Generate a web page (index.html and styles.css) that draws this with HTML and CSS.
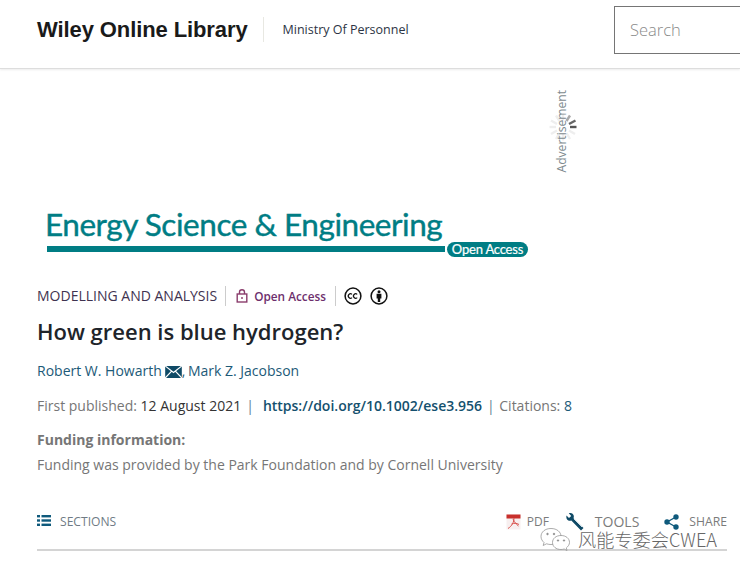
FILE: index.html
```html
<!DOCTYPE html>
<html lang="en">
<head>
<meta charset="utf-8">
<title>How green is blue hydrogen?</title>
<link rel="stylesheet" href="styles.css">
</head>
<body>
<header class="top">
  <div class="brand">Wiley Online Library</div>
  <div class="inst">Ministry Of Personnel</div>
  <div class="search">Search</div>
</header>
<div class="ad">
  <div class="ad-box">
    <svg class="spinner" width="30" height="30" viewBox="0 0 30 30">
      <g stroke-width="2.4" fill="none">
        <path d="M15 1.5V8" stroke="#eee"/>
        <path d="M22 3.5L18.5 9" stroke="#aaa"/>
        <path d="M27.5 8.5L21 12" stroke="#666"/>
        <path d="M28.5 15H22" stroke="#555"/>
        <path d="M27 22L21 18.5" stroke="#eee"/>
        <path d="M22 27L18.5 21" stroke="#eee"/>
        <path d="M15 28.5V22" stroke="#eee"/>
        <path d="M8 27L11.5 21" stroke="#eee"/>
        <path d="M3 22L9 18.5" stroke="#eee"/>
        <path d="M1.5 15H8" stroke="#eee"/>
        <path d="M3 8.5L9 12" stroke="#eee"/>
        <path d="M8 3.5L11.5 9" stroke="#eee"/>
      </g>
    </svg>
    <span class="ad-label">Advertisement</span>
  </div>
</div>
<main class="content">
  <div class="journal">
    <div class="journal-name">Energy Science &amp; Engineering</div>
    <div class="journal-rule">
      <span class="rule-bar"></span>
      <span class="oa-pill">Open Access</span>
    </div>
  </div>
  <div class="meta-row">
    <span class="kind">MODELLING AND ANALYSIS</span>
    <span class="oa">
      <svg width="12" height="14" viewBox="0 0 12 14" fill="none" stroke="#8a3c6c" stroke-width="1.4">
        <rect x="1.2" y="5" width="9.6" height="8" />
        <path d="M3.5 5V3.2a2.5 2.5 0 0 1 5 0V5"/>
        <path d="M6 8v2"/>
      </svg>
      Open Access
    </span>
    <span class="cc">
      <svg width="18" height="18" viewBox="0 0 18 18">
        <circle cx="9" cy="9" r="7.9" fill="#fff" stroke="#111" stroke-width="1.5"/>
        <path d="M8 7.4a2.2 2.2 0 1 0 0 3.2M13.2 7.4a2.2 2.2 0 1 0 0 3.2" fill="none" stroke="#111" stroke-width="1.2"/>
      </svg>
      <svg width="18" height="18" viewBox="0 0 18 18">
        <circle cx="9" cy="9" r="7.9" fill="#fff" stroke="#111" stroke-width="1.5"/>
        <circle cx="9" cy="4.8" r="1.5" fill="#111"/>
        <path d="M6.6 6.8h4.8v4.6h-1.2V15H7.8v-3.6H6.6z" fill="#111"/>
      </svg>
    </span>
  </div>
  <h1 class="title">How green is blue hydrogen?</h1>
  <div class="authors">
    <a>Robert W. Howarth</a><svg class="mail" width="17" height="12" viewBox="0 0 18 13"><rect width="18" height="13" fill="#0f4a66"/><path d="M0 0L9 7L18 0M0 13L7 5.5M18 13L11 5.5" fill="none" stroke="#fff" stroke-width="1.3"/></svg><span class="comma">,</span><a>Mark Z. Jacobson</a>
  </div>
  <div class="pub">
    First published: <span class="dark">12 August 2021</span><span class="bar first">|</span><a class="doi">https://doi.org/10.1002/ese3.956</a><span class="bar">|</span>Citations: <a class="cit">8</a>
  </div>
  <div class="fund-h">Funding information:</div>
  <div class="fund">Funding was provided by the Park Foundation and by Cornell University</div>
  <nav class="tools">
    <div class="sections">
      <svg width="14" height="11" viewBox="0 0 14 11" fill="#0f5a7c">
        <rect x="0" y="0" width="3" height="2.4"/><rect x="4.5" y="0" width="9.5" height="2.4"/>
        <rect x="0" y="4.3" width="3" height="2.4"/><rect x="4.5" y="4.3" width="9.5" height="2.4"/>
        <rect x="0" y="8.6" width="3" height="2.4"/><rect x="4.5" y="8.6" width="9.5" height="2.4"/>
      </svg>
      <span>SECTIONS</span>
    </div>
    <div class="actions">
      <span class="act pdf">
        <svg width="15" height="16" viewBox="0 0 15 16">
          <rect x="0.5" y="0.5" width="14" height="15" fill="#f7efef"/>
          <rect x="0.5" y="0.5" width="14" height="4" fill="#c8302c"/>
          <path d="M8 4C8 8 6 12 2 14.500M5.500 10C8 9 11 9 13 10.500M7 5C9 9 10 10 12.500 12" fill="none" stroke="#d9534f" stroke-width="1"/>
        </svg>
        PDF
      </span>
      <span class="act tl">
        <svg width="20" height="20" viewBox="0 0 20 20">
          <path d="M1.500 3.500L4 6L6.200 4L3.800 1.300C5.800 .3 8.300 1.200 8.800 3.800C9 4.800 8.800 5.500 8.500 6.200L18.500 16L16 18.500L6.300 8.500C4 9.500 .5 8 1.500 3.500Z" fill="#0f4a66"/>
          <path d="M9 7L17 15" stroke="#cfe0e8" stroke-width="1"/>
        </svg>
        TOOLS
      </span>
      <span class="act sh">
        <svg width="15" height="16" viewBox="0 0 15 16" fill="#0f5a7c">
          <circle cx="12" cy="3" r="2.700"/><circle cx="3" cy="8" r="2.700"/><circle cx="12" cy="13" r="2.700"/>
          <path d="M12 3L3 8L12 13" fill="none" stroke="#0f5a7c" stroke-width="1.400"/>
        </svg>
        SHARE
      </span>
    </div>
  </nav>
  <div class="tools-rule"></div>
</main>
<div class="watermark">
  <svg width="32" height="25" viewBox="0 0 32 24" fill="#fff" stroke="#888" stroke-width="0.7">
    <path d="M11 1C5 1 1 4.500 1 9C1 11.500 2.300 13.500 4 15L3.200 18L6.500 16.300C8 16.800 9.500 17 11 17C17 17 21 13.500 21 9C21 4.500 17 1 11 1Z"/>
    <path d="M21 8C16 8 12.500 11 12.500 15C12.500 19 16 22 21 22C22 22 23.200 21.800 24.200 21.500L27 23L26.300 20.400C28 19 29.500 17.200 29.500 15C29.500 11 26 8 21 8Z"/>
    <circle cx="7.500" cy="6.500" r="0.800" fill="#777"/><circle cx="14" cy="6.500" r="0.800" fill="#777"/>
    <circle cx="18" cy="13" r="0.700" fill="#777"/><circle cx="24" cy="13" r="0.700" fill="#777"/>
  </svg>
  <span class="wm-text">风能专委会CWEA</span>
</div>
</body>
</html>
```
FILE: styles.css
```css
* { box-sizing: border-box; }
html, body { margin: 0; padding: 0; }
body {
  width: 740px;
  height: 572px;
  overflow: hidden;
  position: relative;
  background: #fff;
  font-family: "Open Sans", "Noto Sans", sans-serif;
  color: #5f5f5f;
}
a { color: #1c5a78; text-decoration: none; }

.top {
  height: 69px;
  display: flex;
  align-items: center;
  padding: 0 0 9px 37px;
  border-bottom: 1px solid #ddd;
  box-shadow: 0 1px 2px rgba(0,0,0,.08);
}
.brand {
  font-family: "Liberation Sans", Arial, sans-serif;
  font-weight: 700;
  font-size: 22px;
  letter-spacing: -.1px;
  color: #1a1a1a;
  padding-right: 15px;
  border-right: 1px solid #e8e8e2;
  height: 25px;
  line-height: 25px;
}
.inst {
  font-size: 12.5px;
  color: #2c3444;
  margin-left: 19px;
}
.search {
  margin-left: auto;
  width: 126px;
  height: 48px;
  margin-right: 0;
  border: 1px solid #757575;
  border-right: 0;
  padding-left: 15px;
  line-height: 46px;
  font-size: 16.5px;
  font-weight: 300;
  color: #8a8a8a;
}

.ad { height: 131px; display: flex; justify-content: flex-start; padding-left: 548px; }
.ad-box { position: relative; width: 30px; height: 131px; }
.spinner { position: absolute; left: 0; top: 43px; }
.ad-label {
  position: absolute;
  left: 6px;
  top: 21px;
  writing-mode: vertical-rl;
  transform: rotate(180deg);
  font-size: 12.1px;
  line-height: 16px;
  color: #7e8a8e;
}

.content { padding: 0 13px 0 37px; }
.journal { width: 491px; margin-left: 8px; height: 64px; margin-top: 6px; }
.journal-name {
  font-family: Lato, sans-serif;
  font-size: 31.5px;
  line-height: 36px;
  letter-spacing: -.45px;
  -webkit-text-stroke: .4px #007d84;
  color: #007d84;
}
.journal-rule { display: flex; align-items: center; margin-top: -1px; height: 16px; }
.rule-bar { width: 398px; height: 6px; margin-left: 2px; background: #007d84; }
.oa-pill {
  width: 81px;
  height: 15px;
  margin-left: 2px;
  background: #007d84;
  border-radius: 8px;
  color: #fff;
  font-family: Lato, sans-serif;
  font-size: 13px;
  line-height: 15px;
  text-align: center;
  letter-spacing: -.2px;
  -webkit-text-stroke: .2px #fff;
}

.meta-row { display: flex; align-items: center; height: 20px; margin-top: 16px; }
.kind { font-size: 14px; color: #3f3350; padding-right: 8px; border-right: 1px solid #ccc; line-height: 20px; }
.oa { display: flex; align-items: center; gap: 6px; font-size: 11.8px; font-weight: 600; color: #6d2f6d; padding: 0 9px 0 10px; border-right: 1px solid #ccc; line-height: 20px; }
.cc { display: flex; gap: 8px; margin-left: 8px; }

.title { margin: 10px 0 0; font-size: 22px; line-height: 30px; font-weight: 600; color: #20242a; }
.authors { margin-top: 15px; display: flex; align-items: center; font-size: 14px; line-height: 20px; }
.mail { margin: 2px 0 0 3px; }
.comma { color: #1c5a78; margin-right: 2.5px; }
.pub { margin-top: 15px; font-size: 14px; line-height: 20px; color: #767676; }
.dark { color: #333; }
.bar { margin: 0 4.5px 0 5px; color: #5e7f95; }
.bar.first { margin: 0 9px 0 5px; }
.doi { font-weight: 600; color: #14506e; }
.cit { color: #1c5a78; }
.fund-h { margin-top: 14px; font-size: 14px; line-height: 20px; font-weight: 700; color: #767676; }
.fund { margin-top: 5px; font-size: 14px; line-height: 20px; color: #767676; }

.tools { display: flex; justify-content: space-between; align-items: center; margin-top: 34px; height: 26px; }
.sections { display: flex; align-items: center; gap: 9px; font-size: 12.1px; line-height: 16px; color: #6f7b85; }
.sections svg { margin-top: -3px; }
.actions { display: flex; align-items: center; }
.act { display: flex; align-items: center; color: #7b7b7b; line-height: 16px; }
.pdf { gap: 6px; font-size: 12px; }
.tl { gap: 10px; margin-left: 16px; font-size: 14px; }
.sh { gap: 10px; margin-left: 25px; font-size: 12.2px; }
.tools-rule { height: 2px; background: #d4d4d4; margin-top: 14px; }

.watermark {
  position: absolute;
  left: 540px;
  top: 527px;
  display: flex;
  align-items: center;
  gap: 6px;
  font-family: "Noto Sans CJK SC", "Noto Sans", sans-serif;
  font-size: 18.2px;
  font-weight: 300;
  color: #666;
}
.wm-text { line-height: 18px; margin-top: -2px; }
```
